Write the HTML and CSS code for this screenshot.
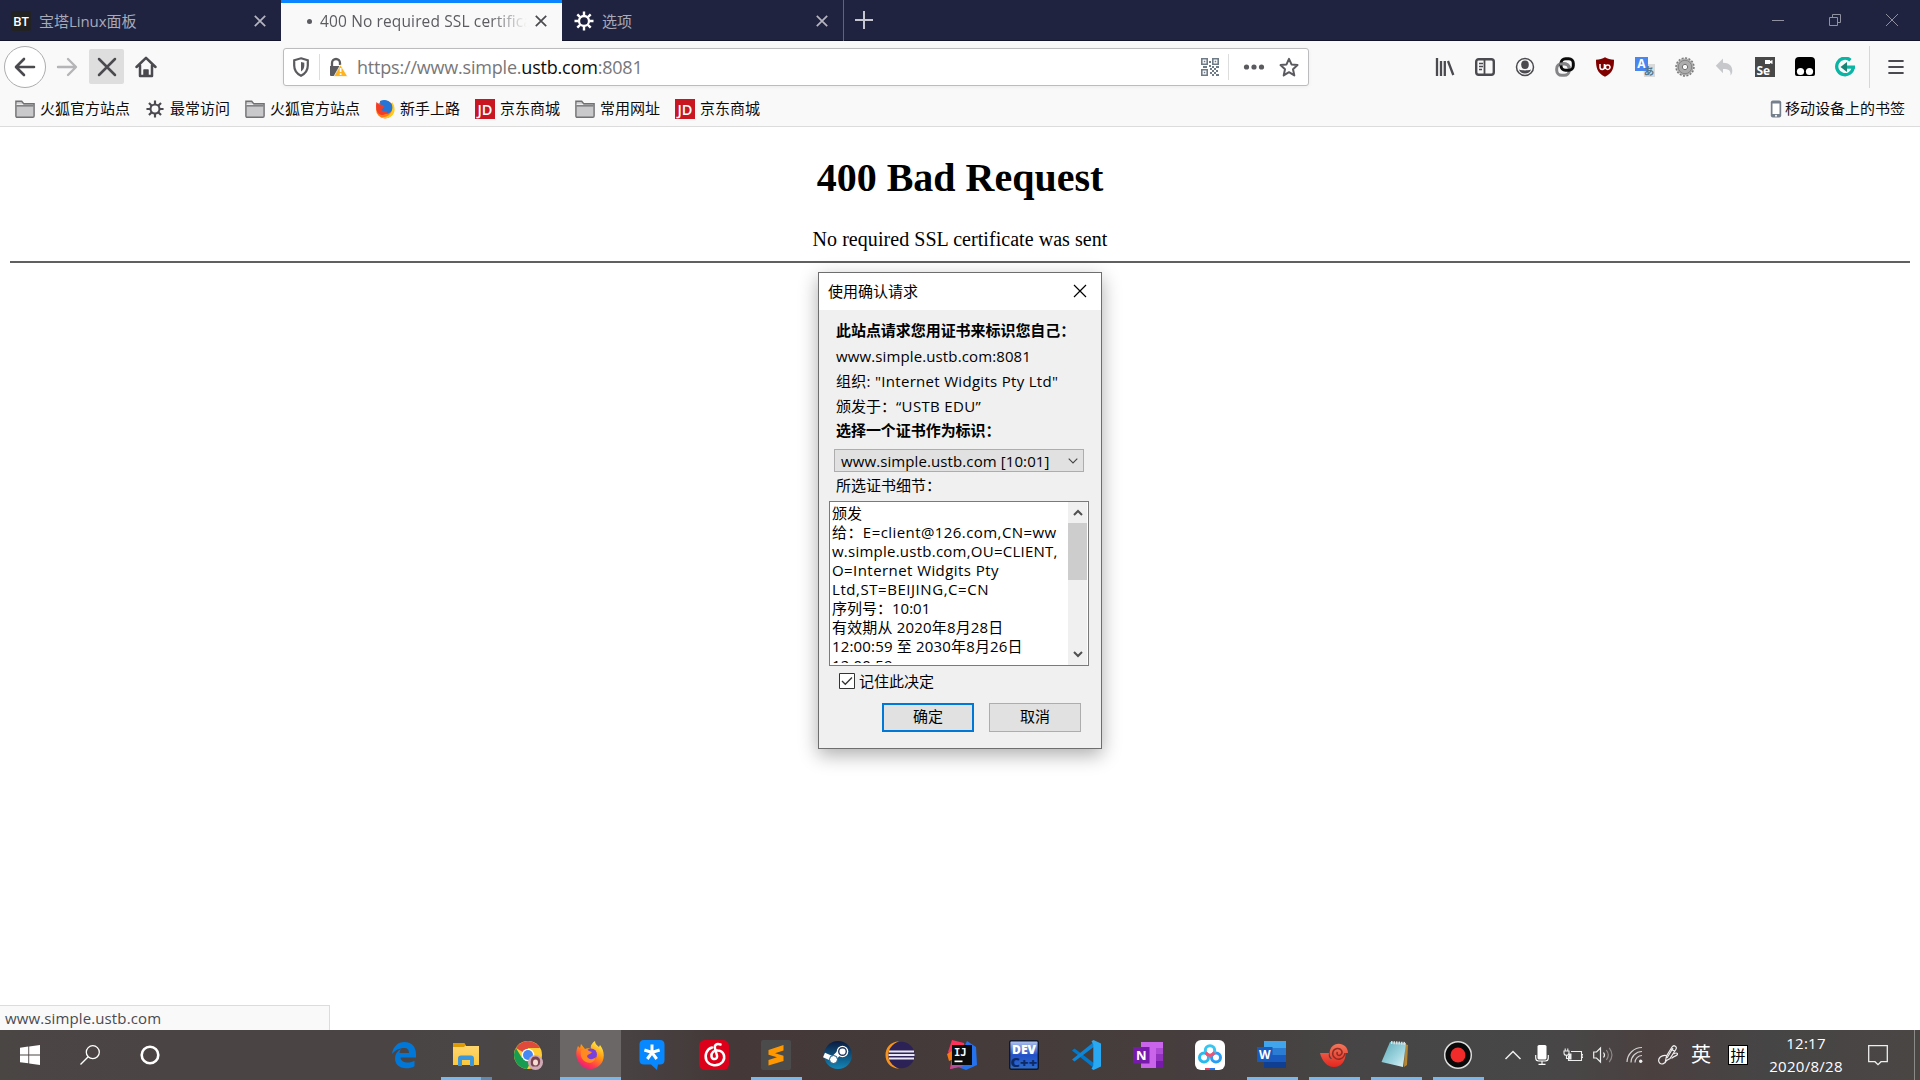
FILE: index.html
```html
<!DOCTYPE html>
<html lang="zh-CN">
<head>
<meta charset="utf-8">
<title>400 No required SSL certificate was sent</title>
<link rel="stylesheet" href="styles.css">
</head>
<body>
<svg class="defs" width="0" height="0" aria-hidden="true">
  <defs>
    <linearGradient id="flame" x1="0.8" y1="0" x2="0.2" y2="1"><stop offset="0" stop-color="#fff44f"/><stop offset=".4" stop-color="#ff980e"/><stop offset=".75" stop-color="#ff3750"/><stop offset="1" stop-color="#e31587"/></linearGradient>
    <linearGradient id="steam" x1="0" y1="0" x2="0" y2="1"><stop offset="0" stop-color="#0b1a3e"/><stop offset="1" stop-color="#1387b8"/></linearGradient>
    <linearGradient id="dev" x1="0" y1="0" x2="0" y2="1"><stop offset="0" stop-color="#b8c8ee"/><stop offset=".5" stop-color="#2350c8"/><stop offset="1" stop-color="#2f6ecb"/></linearGradient>
    <linearGradient id="pad" x1="0" y1="0" x2="1" y2="1"><stop offset="0" stop-color="#5aa9b8"/><stop offset=".6" stop-color="#9fd6e0"/><stop offset="1" stop-color="#e2f3f5"/></linearGradient>
    <linearGradient id="shell" x1="0" y1="0" x2="0" y2="1"><stop offset="0" stop-color="#f2775a"/><stop offset="1" stop-color="#e5261f"/></linearGradient>
    <linearGradient id="yellow" x1="0" y1="0" x2="0" y2="1"><stop offset="0" stop-color="#ffd978"/><stop offset="1" stop-color="#fbc73c"/></linearGradient>
    <symbol id="folder" viewBox="0 0 20 20"><path d="M.9 17V2.200h5.800l2 2.600h10.400V17q0 1.300-1.300 1.300H2.200Q.9 18.300.9 17z" fill="#c9c9cb" stroke="#717174" stroke-width="1.400"/><path d="M1.600 6.200h16.800v1.300H1.600z" fill="#717174"/><path d="M1.600 4.800h6l1 1.200h-7z" fill="#eee"/></symbol>
    <symbol id="gear" viewBox="0 0 20 20"><g fill="none" stroke="currentColor"><circle cx="10" cy="10" r="5" stroke-width="2.300"/><path d="M10 .5v4M10 15.500v4M.5 10h4M15.500 10h4M3.300 3.300l2.800 2.800M13.900 13.900l2.800 2.800M3.300 16.700l2.800-2.800M13.900 6.100l2.800-2.800" stroke-width="2.400"/></g></symbol>
    <symbol id="close" viewBox="0 0 12 12"><path d="M.8.8l10.400 10.400M11.200.8L.8 11.200" stroke="currentColor" stroke-width="1.700"/></symbol>
    <symbol id="jd" viewBox="0 0 20 20"><path fill="#c81623" d="M0 0h20v20H0z"/><text x="10" y="15.800" text-anchor="middle" textLength="15" lengthAdjust="spacingAndGlyphs" font-family="Open Sans" font-size="15" font-weight="600" fill="#fff">JD</text></symbol>
  </defs>
</svg>

<header class="tabs">
  <div class="tab">
    <svg class="fav" width="20" height="20" viewBox="0 0 20 20"><rect width="20" height="20" rx="2" fill="#222"/><text x="10" y="14.500" text-anchor="middle" font-family="Open Sans" font-size="12" font-weight="600" textLength="16" lengthAdjust="spacingAndGlyphs" fill="#fff">BT</text></svg>
    <span class="tab-title">宝塔Linux面板</span>
    <svg class="x" width="12" height="12"><use href="#close"/></svg>
  </div>
  <div class="tab active">
    <i class="dot"></i>
    <span class="tab-title faded">400 No required SSL certificate was sent</span>
    <svg class="x" width="12" height="12"><use href="#close"/></svg>
  </div>
  <div class="tab third">
    <svg class="fav white" width="20" height="20"><use href="#gear"/></svg>
    <span class="tab-title">选项</span>
    <svg class="x" width="12" height="12"><use href="#close"/></svg>
  </div>
  <svg class="plus" width="18" height="18" viewBox="0 0 18 18"><path d="M9 0v18M0 9h18" stroke="#c6c6d0" stroke-width="2"/></svg>
  <div class="winctl">
    <svg width="14" height="14" viewBox="0 0 14 14"><path d="M1 7.500h12" stroke="#8f90a0"/></svg>
    <svg width="14" height="14" viewBox="0 0 14 14" fill="none" stroke="#8f90a0"><path d="M1.500 4.500h8v8h-8zM4.500 4.500v-3h8v8h-3"/></svg>
    <svg width="14" height="14" viewBox="0 0 14 14"><path d="M1 1l12 12M13 1L1 13" stroke="#8f90a0"/></svg>
  </div>
</header>

<nav class="toolbar">
  <div class="back"><svg width="22" height="20" viewBox="0 0 22 20" fill="none" stroke="#4a4a4f" stroke-width="2.600" stroke-linecap="round" stroke-linejoin="round"><path d="M20 10H2.500M10 2L2 10l8 8"/></svg></div>
  <div class="btn forward"><svg width="22" height="20" viewBox="0 0 22 20" fill="none" stroke="#b5b5b7" stroke-width="2.400" stroke-linecap="round" stroke-linejoin="round"><path d="M2 10h17.500M12 2l8 8-8 8"/></svg></div>
  <div class="btn stop"><svg width="20" height="20" viewBox="0 0 20 20" stroke="#4a4a4f" stroke-width="2.500" stroke-linecap="round"><path d="M2 2l16 16M18 2L2 18"/></svg></div>
  <div class="btn home"><svg width="22" height="22" viewBox="0 0 22 22" fill="none" stroke="#4a4a4f" stroke-width="2.500" stroke-linecap="round" stroke-linejoin="round"><path d="M1.500 11L11 1.800 20.500 11M5 9.500V20h12V9.500"/><path d="M9 19v-5h4v5" fill="#4a4a4f" stroke-width="1.500"/></svg></div>
  <div class="urlbar">
    <svg class="shield" width="18" height="20" viewBox="0 0 18 20"><path d="M9 1.300l6.800 2v5.200c0 4.800-2.800 8.300-6.800 10.200-4-1.900-6.800-5.400-6.800-10.200V3.300z" fill="none" stroke="#5b5b5f" stroke-width="2.200"/><path d="M9 5v9.500c2.200-1.400 3.300-3.400 3.300-6V5.700z" fill="#5b5b5f"/></svg>
    <div class="lock">
      <svg width="20" height="20" viewBox="0 0 20 20"><path d="M4 10V6a4 4 0 0 1 8 0v2" fill="none" stroke="#5b5b5f" stroke-width="2.300"/><path d="M2 9h10v10H3q-1 0-1-1z" fill="#5b5b5f"/><path d="M12.500 7.800L19.300 19q.1.500-.5.500H6.500q-.6 0-.3-.6z" fill="#ffb41f" stroke="#fff" stroke-width=".7"/><path d="M12.600 11v4M12.600 16.300v1.700" stroke="#fff" stroke-width="1.700"/></svg>
    </div>
    <span class="url">https://www.simple.<b>ustb.com</b>:8081</span>
    <div class="qr"><svg width="18" height="18" viewBox="0 0 18 18" fill="#6f7a87"><path fill-rule="evenodd" d="M0 0h7v7H0zM1.600 1.600v3.800h3.800V1.600zM11 0h7v7h-7zM12.600 1.600v3.800h3.800V1.600zM0 11h7v7H0zM1.600 12.600v3.800h3.800v-3.800z"/><path d="M2.800 2.800h1.500v1.500H2.800zM13.700 2.800h1.500v1.500h-1.500zM2.800 13.700h1.500v1.500H2.800zM8 3h2v2H8zM8 7h2v2H8zM2 8h4v2H2zM11 8h2v2h-2zM15 8h3v2h-3zM13 10h2v2h-2zM9 10h2v2H9zM11 12h2v2h-2zM15 12h2v2h-2zM9 14h2v2H9zM13 14h2v2h-2zM11 16h2v2h-2zM15 16h3v2h-3z"/></svg></div>
    <svg class="dots" width="22" height="8" viewBox="0 0 22 8" fill="#5b5b5f"><circle cx="3.500" cy="4" r="2.600"/><circle cx="11" cy="4" r="2.600"/><circle cx="18.500" cy="4" r="2.600"/></svg>
    <svg width="20" height="20" viewBox="0 0 20 20"><path d="M10 1.800l2.500 5.600 6 .7-4.500 4.100 1.300 6.200L10 15.200l-5.300 3.200L6 12.200 1.500 8.100l6-.7z" fill="none" stroke="#5b5b5f" stroke-width="2" stroke-linejoin="round"/></svg>
  </div>
  <div class="addons">
    <svg viewBox="0 0 20 20"><path d="M2 1v18M6 4v15M9.800 4v15M13 4l5.300 14" stroke="#4a4a4f" stroke-width="2.300"/></svg>
    <svg viewBox="0 0 20 20"><rect x="1.200" y="2.200" width="17.600" height="15.600" rx="2.500" fill="none" stroke="#4a4a4f" stroke-width="2.400"/><path d="M9.500 3v14" stroke="#4a4a4f" stroke-width="1.800"/><path d="M4 6.500h4M4 9.500h4M4 12.500h3" stroke="#4a4a4f" stroke-width="1.300"/></svg>
    <svg viewBox="0 0 20 20"><circle cx="10" cy="10" r="8.500" fill="none" stroke="#4a4a4f" stroke-width="1.500"/><ellipse cx="10" cy="7.700" rx="3.800" ry="4.200" fill="#4a4a4f"/><path d="M4 12.500c2 .8 4 .9 6 .9s4-.1 6-.9c-.7 2.400-3 4-6 4s-5.300-1.600-6-4z" fill="#4a4a4f"/></svg>
    <svg viewBox="0 0 20 20" fill="none" stroke-width="3"><rect x="1.700" y="6.700" width="12.600" height="11.600" rx="5" stroke="#858588"/><rect x="6" y="1.700" width="12.300" height="11.600" rx="4.500" stroke="#0a0a0a"/><path d="M4.500 7.200Q6 6.700 9 6.700q4 0 5.300 4" stroke="#858588"/></svg>
    <svg viewBox="0 0 20 20"><path d="M10 .2c2.500 1.600 5.500 2.300 9 2.500 0 8-1 13-9 17.100C2 15.700 1 10.700 1 2.700 4.500 2.500 7.500 1.800 10 .2z" fill="#800000"/><path d="M5 7v3.200a2.200 2.200 0 0 0 4.400 0V7M9.700 7v5M15 9.700a2.300 2.300 0 1 1-4.500 0 2.300 2.300 0 0 1 4.500 0z" fill="none" stroke="#fff" stroke-width="1.500"/></svg>
    <svg viewBox="0 0 20 20"><path fill="#dadada" d="M8 7h12v13H9z"/><path fill="#4a86f0" d="M0 0h13v14H0z"/><text x="6.500" y="11" text-anchor="middle" font-size="12" font-weight="700" font-family="Open Sans" fill="#fff">A</text><text x="14" y="18" text-anchor="middle" font-size="10.500" font-weight="700" font-family="Noto Sans CJK JP" fill="#547890">あ</text></svg>
    <svg viewBox="0 0 20 20" fill="none"><circle cx="10" cy="10" r="8.700" stroke="#777" stroke-width="2" stroke-dasharray="2 1.400"/><circle cx="10" cy="10" r="5.700" stroke="#acacac" stroke-width="5.500"/><circle cx="10" cy="10" r="2.700" stroke="#707070"/><circle cx="10" cy="10" r="6.700" stroke="#868686" stroke-width="1"/></svg>
    <svg viewBox="0 0 20 20"><path d="M8 1.500v4.300c6 0 9.300 3 9.300 8 0 2-.6 3.500-1.800 4.700.4-5-1.500-6.300-7.500-6.400v4.200L.8 8.800z" fill="#c6c8cc"/></svg>
    <svg viewBox="0 0 20 20"><path fill="#484848" d="M0 0h20v20H0z"/><path fill="#fff" d="M10 3h5v1l2.500-1v4L15 6v1h-5z"/><text x="1.500" y="17.500" font-family="Open Sans" font-weight="700" font-size="12" fill="#fff">Se</text></svg>
    <svg viewBox="0 0 20 20"><path fill="#000" d="M4 0h12q4 0 4 4v13q0 2-2 2H2q-2 0-2-2V4q0-4 4-4z"/><circle cx="5.500" cy="14.500" r="3.600" fill="#fff"/><circle cx="14.500" cy="14.500" r="3.600" fill="#fff"/></svg>
    <svg viewBox="0 0 20 20" fill="none"><path d="M15.500 3.200A8.300 8.300 0 1 0 18.300 10" stroke="#09b5a5" stroke-width="3.300"/><path d="M9.500 8.500H20v3.200H9.500z" fill="#09b5a5"/><path d="M12 5v10L5.500 10z" fill="#168477"/></svg>
  </div>
  <div class="menu"><svg width="16" height="16" viewBox="0 0 16 16" stroke="#4a4a4f" stroke-width="2.200" stroke-linecap="round"><path d="M1.200 2h13.600M1.200 8h13.600M1.200 14h13.600"/></svg></div>
</nav>

<div class="bookmarks">
  <div class="bm"><svg><use href="#folder"/></svg><span>火狐官方站点</span></div>
  <div class="bm gearbm"><svg><use href="#gear"/></svg><span>最常访问</span></div>
  <div class="bm"><svg><use href="#folder"/></svg><span>火狐官方站点</span></div>
  <div class="bm"><svg viewBox="0 0 20 20"><circle cx="10" cy="10.500" r="9" fill="#ff7c12"/><path d="M17 3c3 4 3.500 9 1 12.500s-8 5-12 2.500c6 1 11-3 11-8z" fill="#ffcb1c"/><path d="M5 2c4-2 9-1 11.500 3 2 4 .5 8-3 9.500-5 1-8-1.500-8-5z" fill="#2375d8"/><path d="M1.500 3L4 5.500l4 .5 1.500 2-3 2.500c1.500 2.500 4 2.500 6 1.500-1 3.500-5 4.800-8 3.300C1 13 .5 7 1.500 3z" fill="#f13c28"/></svg><span>新手上路</span></div>
  <div class="bm"><svg><use href="#jd"/></svg><span>京东商城</span></div>
  <div class="bm"><svg><use href="#folder"/></svg><span>常用网址</span></div>
  <div class="bm"><svg><use href="#jd"/></svg><span>京东商城</span></div>
  <div class="bm mobile"><svg viewBox="0 0 12 20"><rect x=".8" y="1.500" width="10.400" height="17" rx="2" fill="#75808c"/><path fill="#fff" d="M2.500 4.500h7v10.500h-7z"/><circle cx="6" cy="16.800" r="1" fill="#fff"/></svg><span>移动设备上的书签</span></div>
</div>

<main class="page">
  <h1>400 Bad Request</h1>
  <p>No required SSL certificate was sent</p>
  <hr>
</main>

<section class="dialog">
  <div class="dlg-title"><span>使用确认请求</span><svg width="14" height="14" viewBox="0 0 14 14"><path d="M1 1l12 12M13 1L1 13" stroke="#000" stroke-width="1.200"/></svg></div>
  <div class="dlg-body">
    <div class="line strong">此站点请求您用证书来标识您自己：</div>
    <div class="line host">www.simple.ustb.com:8081</div>
    <div class="line org">组织: "Internet Widgits Pty Ltd"</div>
    <div class="line issuer">颁发于：<span class="q">“USTB EDU”</span></div>
    <div class="line strong">选择一个证书作为标识：</div>
    <div class="select"><span>www.simple.ustb.com [10:01]</span><svg width="10" height="6" viewBox="0 0 10 6"><path d="M.7.700L5 5 9.300.7" fill="none" stroke="#444" stroke-width="1.100"/></svg></div>
    <div class="line">所选证书细节：</div>
    <div class="details">
      <div class="text">
        <div>颁发</div>
        <div class="wide">给：E=client@126.com,CN=ww</div>
        <div class="mid">w.simple.ustb.com,OU=CLIENT,</div>
        <div class="wide">O=Internet Widgits Pty</div>
        <div class="widest">Ltd,ST=BEIJING,C=CN</div>
        <div>序列号：10:01</div>
        <div class="date-line">有效期从 2020年8月28日</div>
        <div class="date-line">12:00:59 至 2030年8月26日</div>
        <div class="date-line">12:00:59</div>
      </div>
      <div class="scroll">
        <svg width="10" height="7" viewBox="0 0 10 7"><path d="M1 6l4-4 4 4" fill="none" stroke="#505050" stroke-width="2"/></svg>
        <div class="thumb"></div>
        <svg width="10" height="7" viewBox="0 0 10 7"><path d="M1 1l4 4 4-4" fill="none" stroke="#505050" stroke-width="2"/></svg>
      </div>
    </div>
    <div class="remember"><svg width="16" height="16" viewBox="0 0 16 16"><path d="M.5.500h15v15H.5z" fill="#fff" stroke="#333"/><path d="M3 8l3.300 3.300L13 4.500" fill="none" stroke="#333" stroke-width="1.300"/></svg><span>记住此决定</span></div>
    <div class="actions"><button class="ok">确定</button><button>取消</button></div>
  </div>
</section>

<div class="status"><span>www.simple.ustb.com</span></div>

<footer class="taskbar">
  <div class="sys">
    <svg viewBox="0 0 20 20" fill="#fff"><path d="M0 2.800L8.300 1.600v7.900H0zM9.200 1.500L20 0v9.500H9.200zM0 10.400h8.300v7.900L0 17.200zM9.200 10.400H20V20L9.200 18.500z"/></svg>
    <svg viewBox="0 0 20 20" fill="none" stroke="#fff" stroke-width="1.300"><circle cx="12.800" cy="7.200" r="6.500"/><path d="M8.200 11.800L.5 19.500"/></svg>
    <svg viewBox="0 0 20 20" fill="none" stroke="#fff" stroke-width="2.600"><circle cx="10" cy="10" r="8.300"/></svg>
  </div>
  <div class="apps">
    <div class="app"><svg viewBox="0 0 30 30"><path d="M3 14C4 6.500 9 2 15.500 2 23 2 27 7.500 27 14v3.500H11.500c.3 3.500 3.300 5 7 5 2.800 0 5-.7 7-1.800v5.500c-2.300 1.400-5 2-8.300 2C10 28.200 6 24 6 18.500c0-4 2-7.500 6-9.500-1 1.300-1.300 2.500-1.500 4H20c0-3-1.300-5-4.800-5C10.500 8 6 10.300 3 14z" fill="#0178d7"/></svg></div>
    <div class="app split"><svg viewBox="0 0 30 30"><path d="M2 3h11l2 3h13v19H2z" fill="url(#yellow)"/><path d="M2 3h11l1.700 2L13 7H2z" fill="#dd9a05"/><path d="M7 26v-7.500q0-3 3-3h10q3 0 3 3V26h-4v-6h-8v6z" fill="#3a96dd"/></svg></div>
    <div class="app"><svg viewBox="0 0 30 30"><circle cx="15" cy="15" r="14" fill="#fc3"/><path d="M15 15L2.900 8A14 14 0 0 1 27.100 8H15z" fill="#de4b3c"/><path d="M2.900 8A14 14 0 0 0 14 29l5.500-10L9 18z" fill="#179c52"/><circle cx="15" cy="15" r="6.300" fill="#fff"/><circle cx="15" cy="15" r="5" fill="#4587f3"/><circle cx="22.500" cy="22.500" r="7.500" fill="#cfa9b6"/><path d="M18 25c-1-6 1-9 5-8.500s5 4 3.500 8l-2 2h-5z" fill="#7a4550"/><ellipse cx="22.500" cy="22.500" rx="2.500" ry="3" fill="#f7dcd3"/></svg></div>
    <div class="app current"><svg viewBox="0 0 30 30"><path d="M3 6l2 2 1-4 4 5c2-1 4-1 6 0-1-3 1-6 4-8 0 3 2 4 4 6l1-2c5 6 5 15 0 20-6 6-16 5-20-1C1 19 0 12 3 6z" fill="url(#flame)"/><circle cx="16" cy="14.500" r="6" fill="#7940dc"/><path d="M6 11c3-3 6-2 8 0l3 1c-1 2-4 2-5 4 1 4 6 4 9 1-1 5-6 7-10 5-4-2-6-6-5-11z" fill="#ff8a22"/></svg></div>
    <div class="app"><svg viewBox="0 0 30 30"><path d="M7 0h16q4.500 0 4.500 4.500V20q0 4.500-4.500 4.500h-2l-1 5.500-6-5.500H7Q2.500 24.500 2.500 20V4.500Q2.500 0 7 0z" fill="#0788ff"/><path d="M15 4.500V12.500M7.400 10l7.600 2.500L22.600 10M10.300 19l4.700-6.500 4.700 6.500" fill="none" stroke="#fff" stroke-width="3"/></svg></div>
    <div class="app"><svg viewBox="0 0 30 30"><rect width="30" height="30" rx="6" fill="#dd001b"/><path d="M21.500 4.500c-4-1.500-6.500.5-5.500 4l2 7c1 4-5 5-5.500 1s2.500-6.500 6.500-6c6 .5 8 7 4.500 11.500-4.500 5-13 4-16-1.500C5 15 8 9 13 7.500" fill="none" stroke="#fff" stroke-width="2.500" stroke-linecap="round"/></svg></div>
    <div class="app run"><svg viewBox="0 0 30 30"><rect width="30" height="30" rx="2" fill="#4b4b4b"/><path d="M7.500 10L22.500 5v5.500L14 13.300l8.500 2.500V21l-15 4.500V20l8.500-2.700-8.500-2.500z" fill="#ff9800"/></svg></div>
    <div class="app"><svg viewBox="0 0 30 30"><circle cx="15" cy="15" r="14" fill="url(#steam)"/><path d="M1 15l9 4 6-6" stroke="#fff" stroke-width="5" fill="none"/><circle cx="19.500" cy="11.500" r="5.800" fill="#fff"/><circle cx="19.500" cy="11.500" r="3.800" fill="#fff" stroke="#273a60" stroke-width="1.400"/><circle cx="10.500" cy="19.500" r="4" fill="#fff" stroke="#1b5780"/></svg></div>
    <div class="app"><svg viewBox="0 0 30 30"><path d="M14 1.300C5 2 .5 8 .5 15S5 28 14 28.700C7 26 4.500 20 4.500 15S7 4 14 1.300z" fill="#f7941e"/><circle cx="16.500" cy="15" r="13.200" fill="#2c2255"/><path d="M4 11.500h25M3.500 15h26M4 18.500h25" stroke="#e9e7f5" stroke-width="1.900"/></svg></div>
    <div class="app"><svg viewBox="0 0 30 30"><path d="M5 0l12 3 2 22L3 29l2-12-4-5z" fill="#fe315d"/><path d="M0 14l5-3 2 8-5 2z" fill="#f97a12"/><path d="M20 1l9 6 1 18-11 5-11-4z" fill="#2472ed"/><path d="M3 29l4-12 10 9z" fill="#b64c9d"/><path d="M5 5h20v20H5z" fill="#0b0b0b"/><text x="7" y="15.500" font-family="DejaVu Sans Mono" font-weight="700" font-size="10.500" fill="#fff">IJ</text><path d="M7.500 20.500h8v1.700h-8z" fill="#fff"/></svg></div>
    <div class="app"><svg viewBox="0 0 30 30"><rect x=".7" y=".7" width="28.600" height="28.600" rx="1.500" fill="url(#dev)" stroke="#101828" stroke-width="1.400"/><text x="15" y="13.500" text-anchor="middle" font-family="Open Sans" font-weight="800" font-size="12" textLength="24" lengthAdjust="spacingAndGlyphs" fill="#fff">DEV</text><text x="15" y="27" text-anchor="middle" font-family="Open Sans" font-weight="800" font-size="13" textLength="27" lengthAdjust="spacingAndGlyphs" fill="#0c2b66">C++</text></svg></div>
    <div class="app"><svg viewBox="0 0 30 30"><path d="M1 10.500L3.500 8.500 24 24v5z" fill="#0179cb"/><path d="M1 19.500l2.500 2L24 6V1z" fill="#0d86d8"/><path d="M22.500 0L30 3.500v23L22.500 30l-2-1.300 1.800-3V4.300l-1.800-3z" fill="#29a9f2"/></svg></div>
    <div class="app"><svg viewBox="0 0 30 30"><path fill="#ca64ea" d="M8 2h22v26H8z"/><path fill="#ae4bd5" d="M23 8h7v6h-7z"/><path fill="#9332bf" d="M23 14h7v7h-7z"/><path fill="#7719aa" d="M23 21h7v7h-7zM0 7h16.500v16.500H0z"/><text x="8.200" y="20" text-anchor="middle" font-family="Open Sans" font-weight="700" font-size="13" fill="#fff">N</text></svg></div>
    <div class="app"><svg viewBox="0 0 30 30"><rect width="30" height="30" rx="6" fill="#fff"/><g fill="none" stroke-width="3"><circle cx="9" cy="17.500" r="4.500" stroke="#29b9ef"/><circle cx="21" cy="17.500" r="4.500" stroke="#299df5"/><circle cx="15" cy="10.500" r="4.700" stroke="#38c5f1"/><path d="M10.500 12.500q4.500 6 9 0" stroke="#f35370"/></g><path d="M10 28h5v2h-5z" fill="#f23c5e"/><path d="M15 28h5v2h-5z" fill="#2377f3"/></svg></div>
    <div class="app run"><svg viewBox="0 0 30 30"><path fill="#41a5ee" d="M7 1h22v7H7z"/><path fill="#2b7cd3" d="M7 8h22v7H7z"/><path fill="#185abd" d="M7 15h22v7H7z"/><path fill="#103f91" d="M7 22h22v6H7z"/><path fill="#185abd" d="M0 7h15.500v15H0z"/><text x="7.800" y="18.700" text-anchor="middle" font-family="Open Sans" font-weight="700" font-size="12" fill="#fff">W</text></svg></div>
    <div class="app run"><svg viewBox="0 0 30 30"><path d="M1 13h9c-1 4 1 6 3 6-4-4-3-12 3-14.500C22 2 29 6 29 13h-2.500c.5 8-4.500 14-11.500 14S3 21 1 13z" fill="url(#shell)"/><path d="M26 13c-1 6-7 8-10.500 4.500S14 9 18 8.500s6.500 3.500 4 6-5-.5-3.500-2.500" fill="none" stroke="#8f2d24" stroke-width="1.500"/></svg></div>
    <div class="app run"><svg viewBox="0 0 30 30"><path d="M24 4l3 1-1 20-3 2z" fill="#b68632"/><path d="M9 2l16 1-3 24L.5 22z" fill="url(#pad)"/><path d="M10 2.500l15 1" stroke="#d9e0e2" stroke-width="3" stroke-dasharray="1.500 1"/></svg></div>
    <div class="app run"><svg viewBox="0 0 30 30"><circle cx="15" cy="15" r="13.300" fill="#090909" stroke="#ddd" stroke-width="1.500"/><circle cx="15" cy="15" r="7.500" fill="#f12a2a"/></svg></div>
  </div>
  <div class="tray">
    <svg class="chev" width="18" height="20" viewBox="0 0 18 20"><path d="M1.500 14L9 6.500l7.500 7.500" fill="none" stroke="#eee" stroke-width="1.500"/></svg>
    <svg class="mic" width="14" height="20" viewBox="0 0 14 20"><rect x="2.500" width="9" height="14.500" rx="1.500" fill="#fff"/><path d="M.7 10v3q0 3 3 3h6.600q3 0 3-3v-3M7 16v3.300M3.500 19.400h7" fill="none" stroke="#fff" stroke-width="1.100"/></svg>
    <svg class="bat" width="20" height="16" viewBox="0 0 20 16" fill="none" stroke="#eee" stroke-width="1.100"><path d="M8 4.500h10.500v9h-13V9M18.500 7.500H20v3h-1.500M1 4h5v2q0 2.300-2.500 2.300T1 6zM2.200 1.500V4M4.800 1.500V4M3.500 8.300v3.200h2"/><path d="M5.500 6.500h3v6h-3z" fill="#eee" stroke="none"/></svg>
    <svg class="vol" width="20" height="20" viewBox="0 0 20 20" fill="none" stroke="#eee" stroke-width="1.200"><path d="M.7 7h2.800L7.500 3v14L3.500 13H.7z"/><path d="M10.500 7.500q2 2.500 0 5"/><path d="M13.300 5q4 5 0 10M16.200 2.800q5.500 7.200 0 14.400" stroke="#8d8989"/></svg>
    <svg class="wifi" width="18" height="18" viewBox="0 0 18 18" fill="none" stroke="#d2d0d0" stroke-width="1.200"><path d="M1 16A15 15 0 0 1 16 1.500M5 16.500A11 11 0 0 1 16 5.500M9 16.500a7 7 0 0 1 7-7"/><circle cx="14.700" cy="15.200" r="1.700" fill="#eee" stroke="none"/></svg>
    <svg class="pen" width="20" height="20" viewBox="0 0 20 20" fill="none" stroke="#eee" stroke-width="1.200"><path d="M7.500 16l1-5L14 2q1.500-2 3.300-.8t.5 3.300L12 13.500zM13 3.800l3.600 2.400M15 3L9 13"/><path d="M8.500 10.500C3.500 9.500-.5 13.500 1 17s6.500 2 7.500-2M15.500 9c3-2 5-.5 3.500 1s-4 1.500-5.500 3.500"/></svg>
    <span class="ime">英</span>
    <span class="pin">拼</span>
    <div class="clock"><div>12:17</div><div>2020/8/28</div></div>
    <svg class="note" width="20" height="21" viewBox="0 0 20 21"><path d="M.7.700h18.600v16H13l-3 3-3-3H.7z" fill="none" stroke="#eee" stroke-width="1.300"/></svg>
    <i class="peek"></i>
  </div>
</footer>
</body>
</html>
```
FILE: styles.css
```css
* { box-sizing: border-box; }
html, body { margin: 0; height: 100%; overflow: hidden; }
body {
  width: 1920px;
  height: 1080px;
  display: flex;
  flex-direction: column;
  position: relative;
  background: #fff;
  color: #0c0c0d;
  font-family: "Open Sans", "Noto Sans CJK SC", sans-serif;
  font-size: 15px;
}
svg { display: block; flex: none; }
.defs { position: absolute; }
span, .line, .text div { white-space: nowrap; }

/* Tab strip */
.tabs { display: flex; align-items: center; flex: none; height: 41px; background: #202340; border-bottom: 1px solid #12142b; }
.tab { display: flex; align-items: center; width: 281px; height: 41px; padding: 1px 15px 0 11px; color: #a9aab8; }
.tab-title { flex: 1; margin-left: 8px; line-height: 24px; overflow: hidden; font-size: 15px; letter-spacing: -.05px; }
.x { margin-left: 8px; color: #b5b5c0; }
.tab.active { background: #f9f9fa; border-top: 3px solid #0a84ff; padding: 0 15px 1px 26px; color: #5c5c60; }
.tab.active .x { color: #4a4a4f; }
.dot { width: 5px; height: 5px; border-radius: 50%; background: #5c5c60; }
.faded { font-size: 15.500px; letter-spacing: .13px; -webkit-mask-image: linear-gradient(90deg, #000 82%, transparent); mask-image: linear-gradient(90deg, #000 82%, transparent); }
.third { width: 282px; border-right: 1px solid #61637a; padding-left: 12px; }
.white { color: #fff; }
.plus { margin-left: 11px; }
.winctl { display: flex; gap: 43px; margin-left: auto; padding-right: 21px; }

/* Navigation toolbar */
.toolbar { display: flex; align-items: center; flex: none; height: 50px; padding: 1px 0 0 4px; background: #f9f9fa; }
.back { display: grid; place-items: center; width: 42px; height: 42px; border: 1px solid #adadb0; border-radius: 50%; background: #fff; }
.btn { display: grid; place-items: center; width: 35px; height: 35px; border-radius: 2px; }
.forward { margin-left: 3px; }
.stop { margin-left: 5px; background: #dedede; }
.home { margin-left: 4px; }
.urlbar { display: flex; align-items: center; width: 1026px; height: 38px; margin-left: 120px; padding: 0 9px 0 8px; border: 1px solid #bcbcbe; border-radius: 3px; background: #fff; box-shadow: 0 1px 4px rgba(0,0,0,.06); }
.lock { display: flex; align-items: center; height: 26px; margin-left: 9px; padding-left: 8px; border-left: 1px solid #ddd; }
.url { margin-left: 9px; flex: 1; font-size: 18px; line-height: 30px; color: #77777a; letter-spacing: -.2px; }
.url b { font-weight: 400; color: #0c0c0d; }
.qr { display: flex; align-items: center; height: 26px; padding-right: 9px; border-right: 1px solid #ddd; }
.dots { margin: 0 14px; }
.addons { display: flex; gap: 20px; margin-left: 126px; }
.addons svg { width: 20px; height: 20px; }
.menu { display: flex; align-items: center; height: 42px; margin-left: 14px; padding-left: 18px; border-left: 1px solid #d7d7db; }

/* Bookmarks bar */
.bookmarks { display: flex; flex: none; gap: 10px; height: 36px; padding: 0 15px; background: #f9f9fa; border-bottom: 1px solid #dcdcdc; }
.bm { display: flex; align-items: center; gap: 5px; height: 35px; margin-right: 5px; }
.bm svg { width: 20px; height: 20px; color: #4a4a4f; }
.bm span { padding-bottom: 3px; }
.bm.gearbm svg { width: 18px; height: 18px; margin: 0 1px; }
.mobile { margin: 0 0 0 auto; gap: 3px; }
.bm.mobile svg { width: 12px; }

/* Page content */
.page { flex: 1; padding: 27.800px 10px 0; text-align: center; color: #000; font: 20px/23px "Liberation Serif", serif; }
.page h1 { margin: 0 0 26.800px; font-size: 40px; line-height: 46px; }
.page p { margin: 0; letter-spacing: .05px; }
.page hr { margin: 10px 0 0; height: 2px; border: 0; background: #606060; }

/* Certificate dialog, floating over the page */
.dialog { position: absolute; left: 818px; top: 272px; width: 284px; height: 477px; border: 1px solid #6e6e6e; background: #f0f0f0; color: #000; box-shadow: 0 6px 18px rgba(0,0,0,.32); }
.dlg-title { display: flex; align-items: center; justify-content: space-between; height: 37px; padding: 0 14px 2px 9px; background: #fff; }
.dlg-body { padding: 8px 12px 0 10px; }
.line { height: 25px; padding-left: 7px; line-height: 25px; }
.strong { font-weight: 700; letter-spacing: -.05px; }
.host { line-height: 27px; letter-spacing: .12px; }
.org { line-height: 27px; letter-spacing: .3px; }
.issuer { line-height: 27px; }
.q { letter-spacing: .35px; }
.select { display: flex; align-items: center; justify-content: space-between; width: 250px; height: 23px; margin: 6px 0 1px 5px; padding: 0 5px 0 6px; border: 1px solid #adadad; background: #e1e1e1; letter-spacing: .1px; }
.details { display: flex; width: 260px; height: 165px; margin-top: 3px; border: 1px solid #7a7a7a; background: #fff; }
.text { flex: 1; height: 161px; padding: 2px 0 0 2px; overflow: hidden; line-height: 19px; }
.text div { height: 19px; }
.text .wide { letter-spacing: .43px; }
.text .mid { letter-spacing: .24px; }
.text .widest { letter-spacing: .55px; }
.text .date-line { letter-spacing: .17px; }
.scroll { display: flex; flex-direction: column; align-items: center; width: 20px; padding: 7px 0 7px; border-right: 1px solid #fff; background: #f0f0f0; }
.thumb { width: 19px; height: 57px; margin: 7px 0 auto; background: #cdcdcd; }
.remember { display: flex; align-items: center; gap: 4px; height: 30px; padding-left: 10px; }
.remember span { padding-bottom: 2px; }
.actions { display: flex; gap: 15px; margin: 7px 0 0 53px; }
.actions button { width: 92px; height: 29px; padding: 0 0 4px; border: 1px solid #adadad; background: #e1e1e1; font: inherit; color: #000; }
.actions .ok { border: 2px solid #0078d7; }

/* Link status panel */
.status { flex: none; width: 330px; height: 25px; padding-left: 5px; border: 1px solid #dcdcdc; border-width: 1px 1px 0 0; background: #f9f9fa; color: #4a4a4f; line-height: 25px; letter-spacing: .12px; }

/* Windows taskbar */
.taskbar { display: flex; flex: none; height: 50px; background: linear-gradient(90deg, #4a4644, #4a4444 18%, #4a4748 30%, #443838 38%, #463d3d 60%, #474646 72%, #484646 82%, #4b4040 86%, #464545 92%, #4a4644); color: #fff; }
.sys { display: flex; align-items: center; gap: 40px; width: 373px; padding-left: 20px; }
.sys svg { width: 20px; height: 20px; }
.apps { display: flex; }
.app { display: grid; place-items: center; width: 62px; height: 50px; }
.app svg { width: 30px; height: 30px; }
.run { background: linear-gradient(#76b9ed, #76b9ed) 6px 100% / 51px 3px no-repeat; }
.split { background: linear-gradient(90deg, #76b9ed 40px, #5d89b0 40px) 6px 100% / 51px 3px no-repeat; }
.current { background: linear-gradient(#76b9ed, #76b9ed) 1px 100% / 61px 3px no-repeat, linear-gradient(#6b6767, #6b6767) 1px 0 / 61px 50px no-repeat; }
.tray { display: flex; align-items: center; flex: 1; padding-left: 15px; }
.mic { margin-left: 13px; }
.bat { margin-left: 14px; }
.vol { margin-left: 10px; }
.wifi { margin-left: 13px; }
.pen { margin-left: 14px; }
.ime { width: 22px; margin-left: 13px; font-size: 20px; line-height: 26px; }
.pin { display: grid; place-items: center; width: 20px; height: 20px; margin-left: 15px; border: 1px solid #000; background: #fff; color: #000; font-size: 15px; line-height: 18px; }
.clock { width: 84px; margin-left: 16px; text-align: center; line-height: 23px; letter-spacing: .3px; }
.note { margin-left: 20px; }
.peek { width: 1px; height: 50px; margin-left: 26px; background: #8c8989; }
```
